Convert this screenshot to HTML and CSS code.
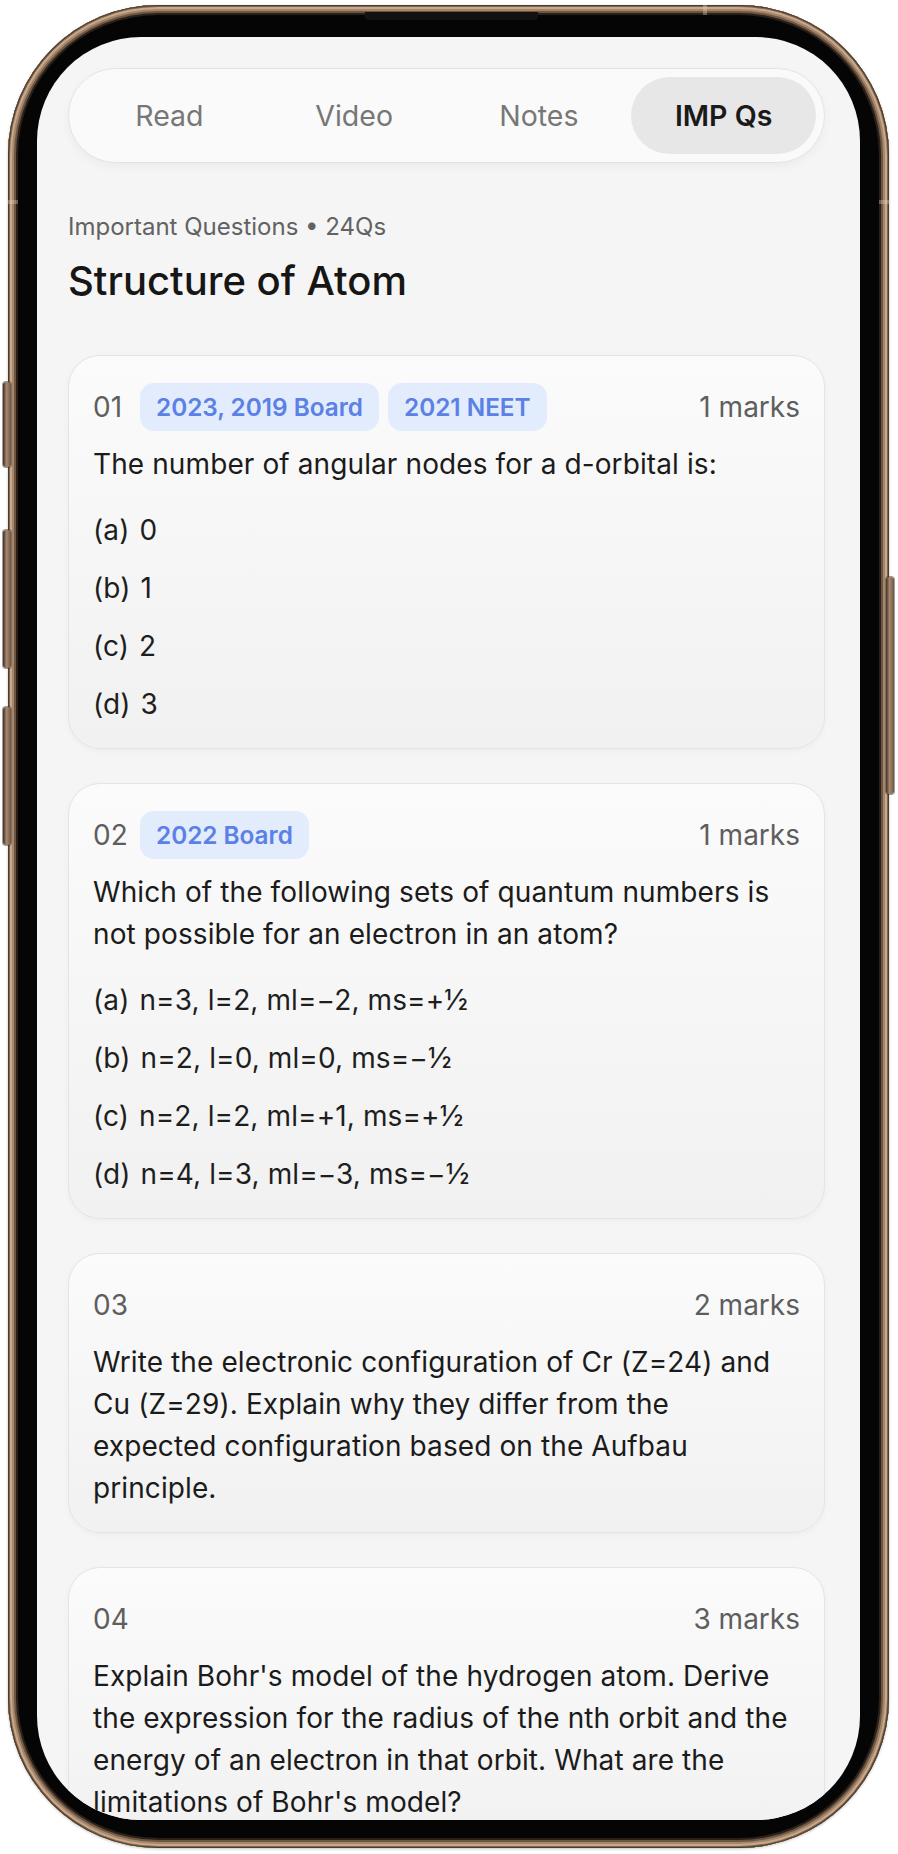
FILE: index.html
```html
<!DOCTYPE html>
<html lang="en">
<head>
<meta charset="utf-8">
<title>Structure of Atom – IMP Qs</title>
<link rel="stylesheet" href="styles.css">
</head>
<body>
<div class="phone">
  <span class="hw hw-action"></span>
  <span class="hw hw-volup"></span>
  <span class="hw hw-voldown"></span>
  <span class="hw hw-power"></span>
  <span class="band band-top"></span>
  <span class="band band-left"></span>
  <span class="band band-right"></span>
  <div class="bezel">
    <span class="speaker"></span>
    <div class="screen">
      <nav class="tabs">
        <span class="tab">Read</span>
        <span class="tab">Video</span>
        <span class="tab">Notes</span>
        <span class="tab tab-active">IMP Qs</span>
      </nav>

      <header class="intro">
        <p class="eyebrow">Important Questions • 24Qs</p>
        <h1 class="title">Structure of Atom</h1>
      </header>

      <section class="list">
        <article class="card">
          <div class="head">
            <span class="num">01</span>
            <div class="tags">
              <span class="tag">2023, 2019 Board</span>
              <span class="tag">2021 NEET</span>
            </div>
            <span class="marks">1 marks</span>
          </div>
          <p class="question">The number of angular nodes for a d-orbital is:</p>
          <ul class="options">
            <li class="option"><span class="opt-label">(a)</span><span>0</span></li>
            <li class="option"><span class="opt-label">(b)</span><span>1</span></li>
            <li class="option"><span class="opt-label">(c)</span><span>2</span></li>
            <li class="option"><span class="opt-label">(d)</span><span>3</span></li>
          </ul>
        </article>

        <article class="card">
          <div class="head">
            <span class="num">02</span>
            <div class="tags">
              <span class="tag">2022 Board</span>
            </div>
            <span class="marks">1 marks</span>
          </div>
          <p class="question">Which of the following sets of quantum numbers is not possible for an electron in an atom?</p>
          <ul class="options">
            <li class="option"><span class="opt-label">(a)</span><span>n=3, l=2, ml=−2, ms=+½</span></li>
            <li class="option"><span class="opt-label">(b)</span><span>n=2, l=0, ml=0, ms=−½</span></li>
            <li class="option"><span class="opt-label">(c)</span><span>n=2, l=2, ml=+1, ms=+½</span></li>
            <li class="option"><span class="opt-label">(d)</span><span>n=4, l=3, ml=−3, ms=−½</span></li>
          </ul>
        </article>

        <article class="card">
          <div class="head">
            <span class="num">03</span>
            <span class="marks">2 marks</span>
          </div>
          <p class="question">Write the electronic configuration of Cr (Z=24) and Cu (Z=29). Explain why they differ from the expected configuration based on the Aufbau principle.</p>
        </article>

        <article class="card">
          <div class="head">
            <span class="num">04</span>
            <span class="marks">3 marks</span>
          </div>
          <p class="question">Explain Bohr's model of the hydrogen atom. Derive the expression for the radius of the nth orbit and the energy of an electron in that orbit. What are the limitations of Bohr's model?</p>
        </article>
      </section>
    </div>
  </div>
</div>
</body>
</html>
```

FILE: styles.css
```css
* {
  box-sizing: border-box;
  margin: 0;
  padding: 0;
}

html, body {
  width: 898px;
  height: 1854px;
  background: #ffffff;
  overflow: hidden;
}

body {
  font-family: Inter, "Noto Sans", "Liberation Sans", sans-serif;
  color: #1b1b1b;
}

/* ---------- phone hardware ---------- */
.phone {
  position: relative;
  margin: 5px 0 0 8px;
  width: 881px;
  height: 1843px;
  border-radius: 150px;
  padding: 10px;
  background: #3b2d24;
  box-shadow:
    inset 0 0 0 1px #4a3a2f,
    inset 0 0 0 2px #80664f,
    inset 0 0 0 4px #c8a98b,
    inset 0 0 0 6px #a4866b,
    inset 0 0 0 8px #6e5645,
    inset 0 0 0 10px #2a201a,
    0 1px 3px rgba(0, 0, 0, 0.25);
}

.hw {
  position: absolute;
  width: 8px;
  border-radius: 3px;
  background: linear-gradient(90deg, #3e3028 0%, #a8886e 45%, #6e5645 100%);
  box-shadow: 0 0 0 1px rgba(50, 38, 30, 0.45);
}

.hw-action { left: -5px; top: 377px; height: 85px; }
.hw-volup { left: -5px; top: 525px; height: 138px; }
.hw-voldown { left: -5px; top: 702px; height: 138px; }
.hw-power { right: -5px; top: 572px; height: 217px; }

.band {
  position: absolute;
  background: rgba(235, 215, 195, 0.35);
}

.band-top { top: 0; left: 695px; width: 4px; height: 10px; }
.band-left { left: 0; top: 195px; width: 10px; height: 4px; }
.band-right { right: 0; top: 195px; width: 10px; height: 4px; }

.bezel {
  position: relative;
  height: 100%;
  border-radius: 140px;
  background: #050505;
  padding: 22px 19px 18px 19px;
}

.speaker {
  position: absolute;
  top: -3px;
  left: 347px;
  width: 173px;
  height: 8px;
  border-radius: 0 0 4px 4px;
  background: #141210;
}

.screen {
  height: 100%;
  border-radius: 104px;
  background: #f5f5f5;
  overflow: hidden;
  padding: 31px 35px 0 31px;
}

/* ---------- tabs ---------- */
.tabs {
  height: 95px;
  border: 1px solid #e3e3e3;
  border-radius: 48px;
  background: #fafafa;
  padding: 8px;
  display: grid;
  grid-template-columns: repeat(4, 1fr);
  box-shadow: 0 4px 10px rgba(0, 0, 0, 0.04);
}

.tab {
  display: flex;
  align-items: center;
  justify-content: center;
  border-radius: 40px;
  font-size: 28.5px;
  color: #777777;
}

.tab-active {
  background: #e7e7e7;
  color: #1a1a1a;
  font-weight: 600;
}

/* ---------- intro ---------- */
.intro {
  margin-top: 48px;
}

.eyebrow {
  font-size: 24px;
  line-height: 32px;
  color: #626262;
}

.title {
  margin-top: 14px;
  font-size: 40px;
  line-height: 48px;
  font-weight: 500;
  color: #161616;
}

/* ---------- cards ---------- */
.list {
  margin-top: 50px;
  display: flex;
  flex-direction: column;
  gap: 34px;
}

.card {
  border: 1px solid #e4e4e4;
  border-radius: 32px;
  padding: 27px 24px 23px;
  background: linear-gradient(180deg, #fbfbfb 0%, #f1f1f1 100%);
  box-shadow: 0 2px 6px rgba(0, 0, 0, 0.035);
}

.head {
  display: flex;
  align-items: center;
  height: 48px;
}

.num {
  width: 47px;
  flex: none;
  font-size: 28px;
  color: #5e5e5e;
}

.tags {
  display: flex;
  gap: 9px;
}

.tag {
  display: flex;
  align-items: center;
  height: 48px;
  padding: 0 16px;
  border-radius: 14px;
  background: #e2ecfd;
  color: #5b80e6;
  font-size: 24.3px;
  font-weight: 600;
}

.marks {
  margin-left: auto;
  font-size: 28px;
  color: #5e5e5e;
}

.question {
  margin-top: 12px;
  font-size: 28px;
  line-height: 42px;
  letter-spacing: 0.1px;
  color: #1b1b1b;
}

.options {
  list-style: none;
  margin-top: 24px;
  display: flex;
  flex-direction: column;
  gap: 16px;
}

.option {
  display: flex;
  gap: 10px;
  font-size: 28px;
  line-height: 42px;
  letter-spacing: 0.1px;
  color: #1e1e1e;
}
```
